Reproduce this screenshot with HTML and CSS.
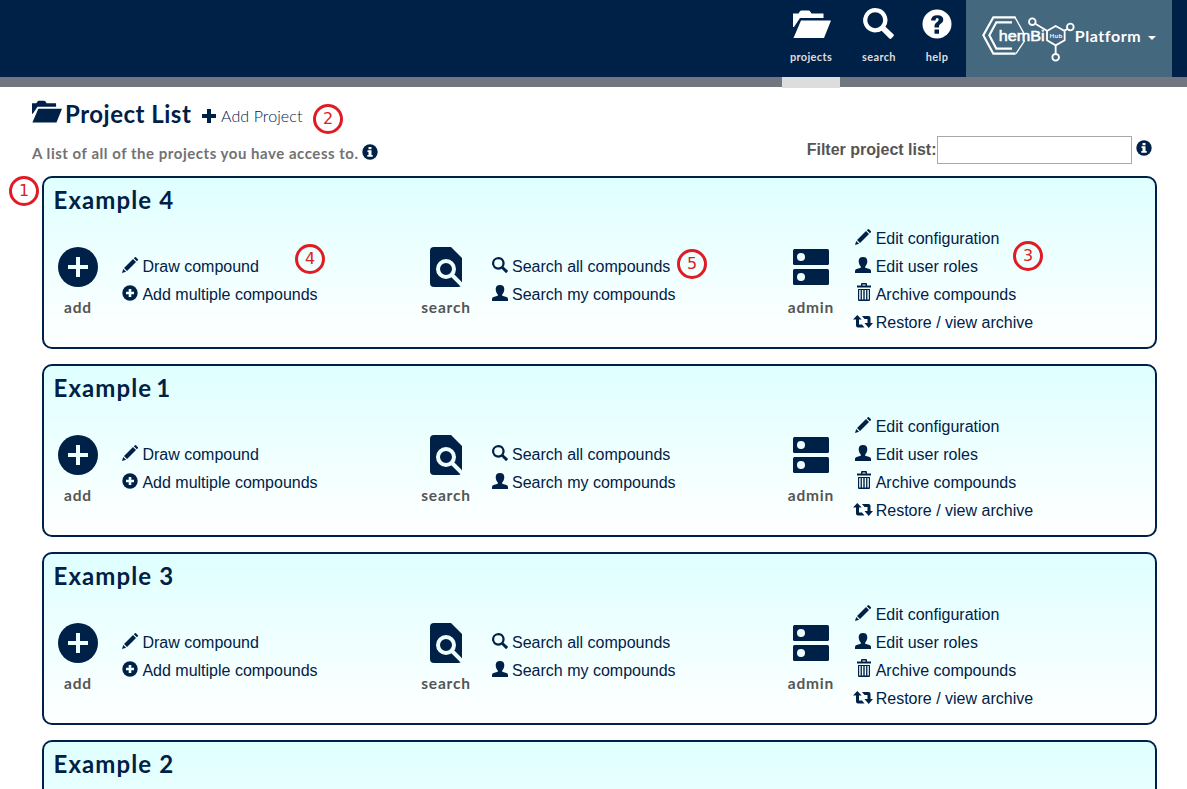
FILE: index.html
```html
<!DOCTYPE html>
<html lang="en">
<head>
<meta charset="utf-8">
<title>Project List</title>
<link rel="stylesheet" href="styles.css">
</head>
<body>
<svg class="sprite" aria-hidden="true">
  <symbol id="folder" viewBox="0 0 38 28"><path d="M0 17V3.500h5.500L7 1.200Q7.600.5 8.500.5h7q1 0 1.500.7L18.500 3.500H30.500V8H7L1 17zM.5 28 8 10.500H38L31 28z"/></symbol>
  <symbol id="glass" viewBox="0 0 16 16"><path fill-rule="evenodd" d="M6.300 0a6.300 6.300 0 0 1 5.300 9.700l4.100 3.900q.5.5 0 1l-1.100 1.100q-.5.5-1 0l-4-4A6.300 6.300 0 1 1 6.300 0zm0 2.200a4.100 4.100 0 1 0 0 8.200 4.100 4.100 0 0 0 0-8.200z"/></symbol>
  <symbol id="help" viewBox="0 0 30 30"><circle cx="15" cy="15" r="14.500"/><path class="cut" d="M12.500 18.500v-1.800q0-2 2-3.300 2.200-1.300 2.200-2.800 0-1.500-1.500-1.500-1.700 0-1.700 2.400H9q.2-5.300 6.500-5.300 5.800 0 5.800 4.500 0 2.300-2.300 3.800-2 1.300-2 2.700v1.300zM12.500 20.500H17v4.300h-4.500z"/></symbol>
  <symbol id="info" viewBox="0 0 16 16"><circle cx="8" cy="8" r="7.700"/><path class="cut" d="M6.500 3h3v2.200h-3zM5.500 6.300h4v4.800h1.200v1.700H5.300v-1.700h1.200V8h-1z"/></symbol>
  <symbol id="plus" viewBox="0 0 14 14"><path d="M5 0h4v5h5v4H9v5H5V9H0V5h5z"/></symbol>
  <symbol id="add" viewBox="0 0 40 40"><circle cx="20" cy="20" r="20"/><path class="cut" d="M18 10h4v8h8v4h-8v8h-4v-8h-8v-4h8z"/></symbol>
  <symbol id="pluscircle" viewBox="0 0 16 16"><circle cx="8" cy="8" r="7.700"/><path class="cut" d="M6.700 4h2.600v2.700H12v2.600H9.300V12H6.700V9.300H4V6.700h2.700z"/></symbol>
  <symbol id="find" viewBox="0 0 32 40"><path d="M4 0h17l11 11v25q0 4-4 4H4q-4 0-4-4V4q0-4 4-4z"/><path class="cut-line" d="M22 28l12 12"/><circle class="cut-line" cx="16" cy="22" r="8"/></symbol>
  <symbol id="server" viewBox="0 0 36 36"><rect width="36" height="16" rx="1.500"/><rect y="20" width="36" height="16" rx="1.500"/><g class="cut"><circle cx="8" cy="8" r="4"/><circle cx="8" cy="28" r="4"/></g></symbol>
  <symbol id="pencil" viewBox="0 0 16 16"><path d="M0 16l1.200-4 2.900 2.800zM2 11 11 2l3 3-9 9zM11.800 1.300 12.900.2q.5-.4 1 0l2 2q.4.500 0 1l-1.100 1.100z"/></symbol>
  <symbol id="user" viewBox="0 0 16 16"><path d="M8 0c2.900 0 4.300 1.600 4.300 4.200 0 2.200-.9 4-2.100 5.200v1.300l4.300 1.400q1.500.6 1.500 1.800V16H0v-2.100q0-1.200 1.500-1.800l4.300-1.400V9.400C4.600 8.200 3.700 6.400 3.700 4.200 3.700 1.600 5.100 0 8 0z"/></symbol>
  <symbol id="trash" viewBox="0 0 16 18"><path fill-rule="evenodd" d="M5 2.500V1q0-1 1-1h4q1 0 1 1v1.500h4V4.500H1v-2zm1.500 0h3v-1h-3zM2 6h12v11q0 1-1 1H3q-1 0-1-1zm1.200 1v9.500h1.400V7zm2.700 0v9.500h1.400V7zm2.800 0v9.500h1.400V7zm2.700 0v9.500h1.400V7z"/></symbol>
  <symbol id="loop" viewBox="0 0 20 14"><path d="M4.300 0 8.700 4.500H6v5h3l2.500 3H5q-2 0-2-2v-6H0zM9 1h6.500q2 0 2 2v5H20l-4.300 5L11.500 8h3V4h-3z"/></symbol>
</svg>

<header class="topbar">
  <nav class="nav">
    <a class="nav-item projects"><svg class="nav-folder"><use href="#folder"/></svg><span>projects</span></a>
    <a class="nav-item"><svg class="nav-glass"><use href="#glass"/></svg><span>search</span></a>
    <a class="nav-item help"><svg class="nav-help"><use href="#help"/></svg><span>help</span></a>
  </nav>
  <div class="brand">
    <svg class="logo" viewBox="45 40 290 150">
      <path class="thick" d="M152 50H85L55 104l30 55h67M141 65H94L73 104l21 40h47"/>
      <path class="thin" d="M150 50l29 52M179 120l-26 39"/>
      <path class="bond" d="M272 76l27 15v28l-27 15-26-15V91zM246 90l-34-20M298 90l10-5M272 134v24"/>
      <circle class="bond" cx="202" cy="63" r="10"/><circle class="bond" cx="316" cy="79" r="10"/><circle class="bond" cx="272" cy="170" r="10"/>
      <text class="logo-word" x="101" y="121" textLength="138" lengthAdjust="spacingAndGlyphs">hemBi</text>
      <text class="logo-hub" x="254" y="111" textLength="37">Hub</text>
    </svg>
    <span>Platform</span><i class="caret"></i>
  </div>
</header>

<main>
  <div class="heading">
    <svg class="head-folder"><use href="#folder"/></svg><h1>Project List</h1>
    <svg class="head-plus"><use href="#plus"/></svg><a class="add-project">Add Project</a>
  </div>
  <div class="subhead">
    <p class="intro"><span>A list of all of the projects you have access to.</span><svg class="info"><use href="#info"/></svg></p>
    <label class="filter"><span>Filter project list:</span><input type="text"><svg class="info"><use href="#info"/></svg></label>
  </div>
  <div id="cards" class="cards"></div>
</main>

<template id="card">
  <section class="card">
    <h2></h2>
    <div class="groups">
      <div class="group">
        <div class="kind"><svg class="big"><use href="#add"/></svg><span>add</span></div>
        <ul>
          <li><svg><use href="#pencil"/></svg>Draw compound</li>
          <li><svg><use href="#pluscircle"/></svg>Add multiple compounds</li>
        </ul>
      </div>
      <div class="group find">
        <div class="kind"><svg class="big page"><use href="#find"/></svg><span>search</span></div>
        <ul>
          <li><svg><use href="#glass"/></svg>Search all compounds</li>
          <li><svg><use href="#user"/></svg>Search my compounds</li>
        </ul>
      </div>
      <div class="group admin">
        <div class="kind"><svg class="big server"><use href="#server"/></svg><span>admin</span></div>
        <ul>
          <li><svg><use href="#pencil"/></svg>Edit configuration</li>
          <li><svg><use href="#user"/></svg>Edit user roles</li>
          <li><svg class="bin"><use href="#trash"/></svg>Archive compounds</li>
          <li><svg class="loop"><use href="#loop"/></svg>Restore / view archive</li>
        </ul>
      </div>
    </div>
  </section>
</template>

<span class="mark m1">1</span>
<span class="mark m2">2</span>
<span class="mark m3">3</span>
<span class="mark m4">4</span>
<span class="mark m5">5</span>
<script src="script.js"></script>
</body>
</html>
```
FILE: styles.css
```css
* { box-sizing: border-box; }
html, body { height: 100%; }
body { margin: 0; overflow: hidden; position: relative; background: #fff; color: #002147; font: 16px "Liberation Sans", Arial, sans-serif; }
svg { display: block; flex: none; fill: currentColor; }
.sprite { position: absolute; width: 0; height: 0; }
.cut { fill: var(--cut, #fff); }
.cut-line { fill: none; stroke: var(--cut, #fff); stroke-width: 4; }

.topbar { display: flex; justify-content: flex-end; height: 87px; padding-right: 15px; background: #002147; border-bottom: 10px solid #727680; }
.nav { display: flex; --cut: #002147; }
.nav-item { display: flex; flex-direction: column; align-items: center; height: 77px; width: 78px; padding-top: 8px; color: #fff; }
.nav-item span { margin-top: auto; margin-bottom: 13px; color: #ddd; font: 700 11px/14px Lato, sans-serif; letter-spacing: .35px; }
.nav-item.projects { width: 58px; height: 88px; border-bottom: 11px solid #ddd; }
.nav-item.help { width: 38px; margin-right: 10px; }
.nav-folder { width: 38px; height: 28px; margin: 2px 0 0 2px; }
.nav-glass { width: 31px; height: 31px; margin-left: -2px; }
.nav-help { width: 30px; height: 30px; margin-top: 1px; }
.brand { display: flex; align-items: center; width: 206px; height: 77px; padding-left: 14px; background: #44687d; color: #fff; }
.brand span { margin: -5px 0 0 -2px; width: 67px; font: 700 16px/20px Lato, sans-serif; letter-spacing: .6px; white-space: nowrap; }
.caret { margin: -1px 0 0 6px; border: 4px solid transparent; border-top-color: #fff; border-bottom: 0; }
.logo { width: 96.67px; height: 50px; }
.logo path, .logo circle { fill: none; stroke: #fff; }
.logo .thick { stroke-width: 6.500; }
.logo .thin { stroke-width: 4; }
.logo .bond { stroke-width: 5.500; }
.logo text { fill: #fff; stroke: #fff; font-family: "Liberation Sans", Arial, sans-serif; }
.logo-word { font-size: 43px; stroke-width: 1.500; }
.logo-hub { font-size: 18px; stroke-width: .5; }

main { padding: 0 32px 0 32px; }
.heading { display: flex; height: 45px; padding-top: 11px; }
.head-folder { width: 30px; height: 23px; margin-top: 2px; }
h1, h2 { margin: 0; font: 700 24px/30px Lato, sans-serif; white-space: nowrap; }
h1 { width: 126px; margin: 1px 0 0 3px; letter-spacing: .5px; }
.head-plus { width: 14px; height: 14px; margin: 11px 0 0 11px; }
.add-project { margin: 7px 0 0 5px; font: 300 16px/22px Lato, sans-serif; letter-spacing: .1px; }
.subhead { display: flex; justify-content: space-between; height: 44px; }
.intro { display: flex; margin: 12px 0 0; color: #727272; font: 700 15px/20px Lato, sans-serif; letter-spacing: .53px; }
.intro span { width: 327px; margin: -1px 3px 0 0; white-space: nowrap; }
.info { width: 16px; height: 16px; color: #002147; }
.filter { display: flex; padding: 4px 3px 0 0; color: #555; font-weight: 700; }
.filter span { line-height: 27px; }
.filter input { width: 195px; height: 28px; margin: 0 4px 0 .5px; border: 1px solid #aaa; }
.filter .info { margin-top: 4px; }

.cards { padding-left: 10px; }
.card { width: 1115px; height: 173px; margin-bottom: 15px; border: 2px solid #002147; border-radius: 10px; background: linear-gradient(#dfffff, #fff) 0 0 / 100% 169px; --cut: #eeffff; }
.card:last-child { height: 49px; margin-bottom: 0; border-bottom: 0; border-radius: 10px 10px 0 0; }
.card:last-child .groups { display: none; }
h2 { height: 45px; padding: 7px 0 0 9.500px; letter-spacing: 1.1px; }
.card:nth-child(2) h2 { word-spacing: -3px; }
.groups { display: grid; grid-template-columns: 368px 368px 1fr; height: 112px; }
.group { display: flex; align-items: center; }
.kind { display: flex; flex-direction: column; align-items: center; width: 68px; padding-top: 3px; color: #555; font: 700 15.500px/18px Lato, sans-serif; letter-spacing: .8px; }
.kind span { margin: -1px 0 1px; }
.big { width: 40px; height: 40px; margin-bottom: 12px; color: #002147; }
.page { width: 32px; }
.server { width: 36px; height: 36px; margin: 2px 0 14px; }
.admin .kind { width: 62px; }
ul { margin: 1px 0 0 10px; padding: 1px 0 0; list-style: none; }
.find ul { margin-left: 11.600px; }
.admin ul { margin-left: 13px; }
li { display: flex; height: 28px; line-height: 28px; white-space: nowrap; }
li svg { width: 16px; height: 16px; margin: 4px 4.400px 0 0; }
.admin li svg { margin-right: 4.700px; }
.admin li .bin { height: 18px; margin: 2px 4px 0 .7px; }
.admin li .loop { width: 20px; height: 14px; margin: 6px 2.700px 0 -2px; }

.mark { position: absolute; width: 30px; height: 30px; border: 3px solid #e01b24; border-radius: 50%; background: #fff; color: #e01b24; font: 16px/24px "DejaVu Sans", sans-serif; text-align: center; }
.m1 { left: 9px; top: 176px; }
.m2 { left: 313px; top: 104px; }
.m3 { left: 1013px; top: 241px; background: none; }
.m4 { left: 295px; top: 244px; background: none; }
.m5 { left: 677px; top: 249px; background: none; }
```
FILE: script.js
```js
const names = ["Example 4", "Example 1", "Example 3", "Example 2"];
const template = document.getElementById("card");
for (const name of names) {
  const card = template.content.cloneNode(true);
  card.querySelector("h2").textContent = name;
  document.getElementById("cards").append(card);
}
```
